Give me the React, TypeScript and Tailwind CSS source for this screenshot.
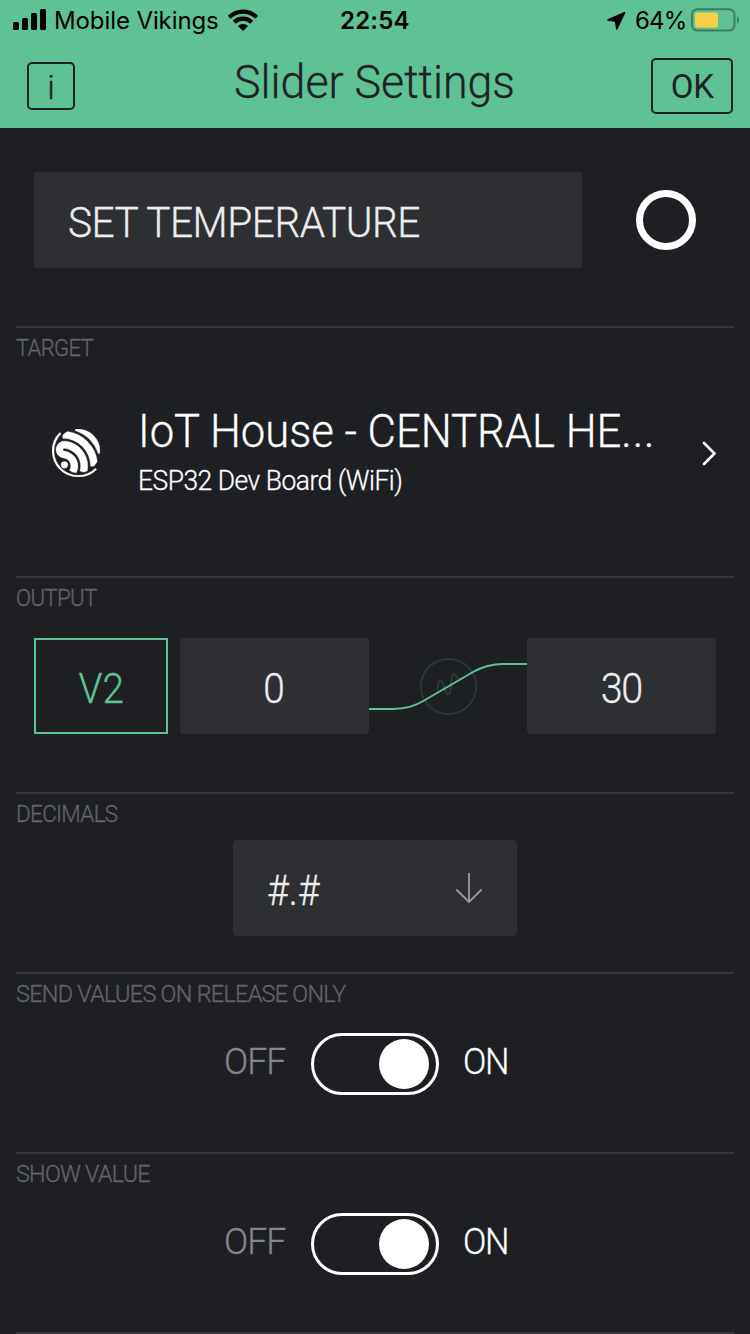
import React from "react";
import { SiEspressif } from "react-icons/si";

function StatusBar() {
  return (
    <div className="flex h-10 items-center font-['Inter','Liberation_Sans',sans-serif] text-black">
      <svg className="ml-[13px] h-[22px] w-[34px] shrink-0" viewBox="0 0 34 22">
        <rect x="0" y="13" width="6" height="8" rx="1.6" />
        <rect x="9" y="9" width="6" height="12" rx="1.6" />
        <rect x="18" y="4" width="6" height="17" rx="1.6" />
        <rect x="27" y="0" width="6" height="21" rx="1.6" />
      </svg>
      <div className="ml-[7px] w-[174px] whitespace-nowrap pt-0.5 text-[24px] leading-10 tracking-[-0.1px]">Mobile Vikings</div>
      <svg className="h-[22px] w-[30px] shrink-0" viewBox="0 0 30 22">
        <g fill="none" stroke="#000" strokeWidth="4.2">
          <path d="M1.3 8.2A19.5 19.5 0 0 1 28.7 8.2" />
          <path d="M6.3 13.2A12.4 12.4 0 0 1 23.7 13.2" />
        </g>
        <path d="M15 22L10 17A7.2 7.2 0 0 1 20 17Z" />
      </svg>
      <div className="ml-[82px] w-[267px] pt-0.5 text-[24px] font-semibold leading-10 tracking-[0.2px]">22:54</div>
      <svg className="h-5 w-5 shrink-0" viewBox="0 0 20 20">
        <path d="M17.4 2.8L1 10L8.6 11.2L9.8 19Z" stroke="#000" strokeWidth="1.6" strokeLinejoin="round" />
      </svg>
      <div className="ml-2 w-[56px] whitespace-nowrap pt-0.5 text-[24px] leading-10 tracking-[-0.8px]">64%</div>
      <svg className="h-6 w-[50px] shrink-0" viewBox="0 0 50 24">
        <rect x="1" y="1.2" width="42.5" height="21.4" rx="5.5" fill="none" stroke="#3d7d5f" strokeWidth="2" />
        <rect x="4" y="4.5" width="23" height="15" rx="2.5" fill="#f8ce46" />
        <path d="M46 8Q48 9.5 48 12T46 16Z" fill="#3d7d5f" />
      </svg>
    </div>
  );
}

interface SectionProps {
  title: string;
  titleClass: string;
  className: string;
  children?: React.ReactNode;
}

function Section({ title, titleClass, className, children }: SectionProps) {
  return (
    <section className={`mx-4 shrink-0 border-t-2 border-[#35363a] ${className}`}>
      <h2 className={`h-10 origin-left whitespace-nowrap text-[23.5px] leading-10 tracking-[-0.7px] text-[#636467] ${titleClass}`}>{title}</h2>
      {children}
    </section>
  );
}

function Toggle() {
  return (
    <div className="mt-[19px] flex h-[62px] items-center">
      <div className="ml-[208px] w-[87px] origin-left scale-x-[0.965] pb-[5px] text-[37px] leading-none tracking-[-1px] text-[#858688]">OFF</div>
      <div className="flex h-[62px] w-32 items-center justify-end rounded-full border-[3.5px] border-white pr-[7px]">
        <div className="size-[50px] rounded-full bg-white" />
      </div>
      <div className="ml-[24px] origin-left scale-x-[0.93] pb-[5px] text-[37px] leading-none tracking-[-1.5px] text-white">ON</div>
    </div>
  );
}

const field = "flex h-24 shrink-0 items-center rounded-[4px] bg-[#2e2f33] pt-[5px] text-[43px] leading-none text-[#ededee]";

export default function App() {
  return (
    <div className="flex h-[1334px] w-[750px] flex-col overflow-hidden bg-[#1e1f23] font-['Roboto','Liberation_Sans',sans-serif] font-light">
      <header className="h-32 shrink-0 bg-[#5fc294] text-[#1e2125]">
        <div className="font-normal">
          <StatusBar />
        </div>
        <div className="flex h-[88px]">
          <div className="ml-[27px] mt-[22px] flex size-12 items-center justify-center rounded-[5px] border-2 border-[#1e2125] pt-0.5 text-[34px] leading-none [-webkit-text-stroke:0.3px]">
            i
          </div>
          <h1 className="ml-[159px] mt-[14px] w-[417px] origin-left scale-x-[0.972] whitespace-nowrap text-[46px] leading-[56px] [-webkit-text-stroke:0.3px]">
            Slider Settings
          </h1>
          <div className="mt-[18px] flex h-14 w-[82px] items-center justify-center rounded-[5px] border-2 border-[#1e2125] text-[34px] font-normal leading-none">
            <span className="scale-x-[0.97]">OK</span>
          </div>
        </div>
      </header>

      <main className="[-webkit-text-stroke:0.3px]">
        <div className="flex h-[198px] items-start pt-11">
          <div className={`${field} ml-[34px] w-[548px] pl-[34px]`}>
            <span className="origin-left scale-x-[0.944] whitespace-nowrap tracking-[-0.5px]">SET TEMPERATURE</span>
          </div>
          <div className="ml-[54px] mt-[18px] size-[60px] rounded-full border-[7px] border-white" />
        </div>

        <Section title="TARGET" titleClass="scale-x-[0.935]" className="h-[250px]">
          <div className="mt-[35px] flex text-white">
            <SiEspressif className="ml-9 mt-[26px] size-12" stroke="#fff" strokeWidth="0.15" />
            <div className="ml-[38px] w-[564px] whitespace-nowrap">
              <div className="origin-left scale-x-[0.948] text-[46px] leading-[56px]">
                IoT House - CENTRAL HE<span className="tracking-[1px]">...</span>
              </div>
              <div className="mt-1.5 origin-left scale-x-[0.978] text-[27px] leading-8 tracking-[-0.5px]">ESP32 Dev Board (WiFi)</div>
            </div>
            <svg className="mt-[37px] h-[26px] w-4" viewBox="0 0 16 26" fill="none" stroke="#fff" strokeWidth="2.6" strokeLinecap="round">
              <path d="M2 3L12.5 13.5L2 24" />
            </svg>
          </div>
        </Section>

        <Section title="OUTPUT" titleClass="scale-x-[0.945]" className="h-[216px]">
          <div className="ml-[18px] mt-5 flex">
            <div className="flex h-24 w-[134px] items-center justify-center border-2 border-[#5fc294] pt-[5px] text-[43px] leading-none text-[#5fc294]">
              <span className="scale-x-[0.9]">V2</span>
            </div>
            <div className={`${field} ml-3 w-[189px] justify-center`}>
              <span className="-ml-0.5 scale-x-[0.9]">0</span>
            </div>
            <svg className="h-24 w-[158px]" viewBox="0 0 158 96" fill="none" strokeWidth="2">
              <circle cx="79.5" cy="48.5" r="27.6" stroke="#263a35" />
              <path d="M68.3 52.7C69 44 70.5 42.3 72 42.7C75 43.5 76 56.3 79.3 56.3C83.5 56.3 81 36 84.5 36C86.5 36 87 39 90 41" stroke="#263f37" />
              <path d="M0 71H24C38 71 48 67 56 62L104 34C113 29 122 26 134 26H158" stroke="#5fc294" />
            </svg>
            <div className={`${field} w-[189px] justify-center`}>
              <span className="scale-x-[0.92] tracking-[-1.5px]">30</span>
            </div>
          </div>
        </Section>

        <Section title="DECIMALS" titleClass="scale-x-[0.955]" className="h-[180px]">
          <div className={`${field} ml-[217px] mt-[6px] w-[284px]`}>
            <div className="ml-[34px] w-[187px]">
              <div className="origin-left scale-x-[0.87]">#.#</div>
            </div>
            <svg className="-mt-[5px] h-8 w-7" viewBox="0 0 28 32" fill="none" stroke="#98999b" strokeWidth="1.8">
              <path d="M15 1V30M2.3 17.5L15 30L27.7 17.5" />
            </svg>
          </div>
        </Section>

        <Section title="SEND VALUES ON RELEASE ONLY" titleClass="scale-x-[0.995]" className="h-[180px]">
          <Toggle />
        </Section>
        <Section title="SHOW VALUE" titleClass="scale-x-[0.99]" className="h-[180px]">
          <Toggle />
        </Section>
        <div className="mx-4 h-0.5 bg-[#35363a]" />
      </main>
    </div>
  );
}
